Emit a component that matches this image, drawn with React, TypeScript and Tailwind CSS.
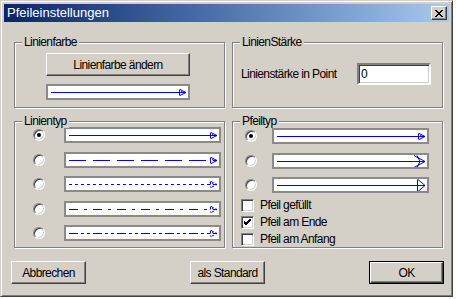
import type { ReactNode } from "react";

const BLUE = "#0000ff";

type Dash = "solid" | "long" | "dot" | "dashdot" | "dashdotdot";

const dashes: Record<Dash, string | undefined> = {
  solid: undefined,
  long: "17 7",
  dot: "3 3",
  dashdot: "9 6 3 6",
  dashdotdot: "9 3 3 3 3 3",
};

function Group({
  label,
  className,
  children,
}: {
  label: string;
  className: string;
  children?: ReactNode;
}) {
  return (
    <div
      className={`relative border border-[#808080] shadow-[inset_1px_1px_0_#fff,1px_1px_0_#fff] ${className}`}
    >
      <span className="absolute left-[7px] top-[-8px] bg-[#d4d0c8] px-[2px] leading-[14px]">
        {label}
      </span>
      {children}
    </div>
  );
}

function RaisedButton({
  children,
  className = "",
  isDefault = false,
}: {
  children: ReactNode;
  className?: string;
  isDefault?: boolean;
}) {
  const inner = (
    <div className="flex h-full w-full items-center justify-center border border-t-white border-l-white border-r-[#404040] border-b-[#404040] shadow-[inset_-1px_-1px_0_#808080]">
      {children}
    </div>
  );
  if (isDefault) {
    return (
      <button className={`border border-black bg-[#d4d0c8] p-0 ${className}`}>
        {inner}
      </button>
    );
  }
  return (
    <button className={`bg-[#d4d0c8] p-0 ${className}`}>{inner}</button>
  );
}

function Radio({ checked = false }: { checked?: boolean }) {
  return (
    <span className="flex h-[12px] w-[12px] shrink-0 items-center justify-center rounded-full border border-t-[#808080] border-l-[#808080] border-r-white border-b-white bg-white shadow-[inset_1px_1px_0_#404040,inset_-1px_-1px_0_#d4d0c8]">
      {checked && <span className="h-[4px] w-[4px] rounded-full bg-black" />}
    </span>
  );
}

function Checkbox({ checked = false }: { checked?: boolean }) {
  return (
    <span className="flex h-[13px] w-[13px] shrink-0 items-center justify-center border border-t-[#808080] border-l-[#808080] border-r-white border-b-white bg-white shadow-[inset_1px_1px_0_#404040,inset_-1px_-1px_0_#d4d0c8]">
      {checked && (
        <svg width="7" height="7" viewBox="0 0 7 7">
          <path d="M0 2 L2 4 L7 -1 M0 3 L2 5 L7 0 M0 4 L2 6 L7 1" stroke="#000" strokeWidth="1" fill="none" />
        </svg>
      )}
    </span>
  );
}

type Head = "small" | "double" | "open";

function LinePreview({
  w,
  h,
  dash = "solid",
  head = "small",
}: {
  w: number;
  h: number;
  dash?: Dash;
  head?: Head;
}) {
  const c = h / 2 + 0.5;
  const tip = w - 2;
  const da = dashes[dash];
  return (
    <div
      className="border-2 border-[#8a8a8a] bg-white"
      style={{ width: w + 4, height: h + 4 }}
    >
      <svg width={w} height={h} viewBox={`0 0 ${w} ${h}`} className="block">
        <line x1="3" y1={c} x2={tip} y2={c} stroke={BLUE} strokeWidth="1" strokeDasharray={da} />
        {head === "small" && (
          <path
            d={`M${tip - 6.5} ${c - 3} L${tip - 6.5} ${c + 3} M${tip - 6} ${c - 3} L${tip} ${c} L${tip - 6} ${c + 3} M${tip - 5} ${c - 1} L${tip - 3} ${c}`}
            stroke={BLUE}
            strokeWidth="1"
            fill="none"
            strokeDasharray={dash === "solid" || dash === "long" ? undefined : "3 2"}
          />
        )}
        {head === "double" && (
          <path
            d={`M${tip - 11} ${c - 6} L${tip} ${c} L${tip - 11} ${c + 6} M${tip - 8} ${c - 6} L${tip - 5} ${c} L${tip - 8} ${c + 6}`}
            stroke={BLUE}
            strokeWidth="1"
            fill="none"
          />
        )}
        {head === "open" && (
          <path
            d={`M${tip - 7.5} ${c - 6} L${tip - 7.5} ${c + 6} M${tip - 7} ${c - 6} L${tip} ${c} L${tip - 7} ${c + 6}`}
            stroke={BLUE}
            strokeWidth="1"
            fill="none"
          />
        )}
      </svg>
    </div>
  );
}

const lineTypes: Dash[] = ["solid", "long", "dot", "dashdot", "dashdotdot"];
const arrowTypes: Head[] = ["small", "double", "open"];

export default function App() {
  return (
    <div className="h-[299px] w-[456px] bg-white font-['Liberation_Sans',Arial,sans-serif] text-[12px] tracking-[-0.6px] text-black">
      <div className="flex h-[297px] w-[453px] flex-col border border-t-[#d4d0c8] border-l-[#d4d0c8] border-r-[#404040] border-b-[#404040] bg-[#d4d0c8] p-[3px] shadow-[inset_1px_1px_0_#fff,inset_-1px_-1px_0_#808080]">
        {/* Title bar */}
        <div className="flex h-[18px] shrink-0 items-center justify-between bg-gradient-to-r from-[#0a246a] to-[#a6caf0] pl-[3px] pr-[2px]">
          <span className="text-[13px] tracking-normal text-white">Pfeileinstellungen</span>
          <div className="flex h-[14px] w-[16px] items-center justify-center border border-t-white border-l-white border-r-[#404040] border-b-[#404040] bg-[#d4d0c8] shadow-[inset_-1px_-1px_0_#808080]">
            <svg width="8" height="7" viewBox="0 0 8 7">
              <path d="M0 0 L7 7 M1 0 L8 7 M7 0 L0 7 M8 0 L1 7" stroke="#000" strokeWidth="1" />
            </svg>
          </div>
        </div>

        {/* Row 1 */}
        <div className="ml-[10px] mt-[20px] flex gap-[7px]">
          <Group label="Linienfarbe" className="h-[66px] w-[211px] pl-[31px] pt-[10px]">
            <RaisedButton className="h-[23px] w-[144px]">Linienfarbe ändern</RaisedButton>
            <div className="mt-[8px]">
              <LinePreview w={140} h={12} />
            </div>
          </Group>
          <Group label="LinienStärke" className="flex h-[66px] w-[211px] items-start pl-[8px] pt-[20px]">
            <div className="flex h-[22px] w-full items-center">
              <span>Linienstärke in Point</span>
              <div className="ml-auto mr-[11px] flex h-[22px] w-[74px] items-center border-2 border-t-[#808080] border-l-[#808080] border-r-white border-b-white bg-white pl-[2px] shadow-[inset_1px_1px_0_#404040,inset_-1px_-1px_0_#d4d0c8]">
                0
              </div>
            </div>
          </Group>
        </div>

        {/* Row 2 */}
        <div className="ml-[10px] mt-[13px] flex gap-[7px]">
          <Group label="Linientyp" className="flex h-[127px] w-[211px] flex-col gap-[8.5px] pl-[18px] pt-[5px]">
            {lineTypes.map((d, i) => (
              <div key={d} className="flex items-center gap-[19px]">
                <Radio checked={i === 0} />
                <LinePreview w={153} h={12} dash={d} />
              </div>
            ))}
          </Group>
          <Group label="Pfeiltyp" className="flex h-[127px] w-[211px] flex-col pt-[6px]">
            <div className="flex flex-col gap-[8.5px] pl-[12px]">
              {arrowTypes.map((h, i) => (
                <div key={h} className="flex items-center gap-[15px]">
                  <Radio checked={i === 0} />
                  <LinePreview w={153} h={12} head={h} />
                </div>
              ))}
            </div>
            <div className="mt-[6px] flex flex-col gap-[4px] pl-[8px]">
              {[
                ["Pfeil gefüllt", false],
                ["Pfeil am Ende", true],
                ["Pfeil am Anfang", false],
              ].map(([label, checked]) => (
                <div key={label as string} className="flex h-[13px] items-center gap-[6px]">
                  <Checkbox checked={checked as boolean} />
                  <span className="leading-[13px]">{label as string}</span>
                </div>
              ))}
            </div>
          </Group>
        </div>

        {/* Buttons */}
        <div className="ml-[7px] mr-[5px] mt-[13px] flex justify-between">
          <RaisedButton className="h-[23px] w-[75px]">Abbrechen</RaisedButton>
          <RaisedButton className="h-[23px] w-[75px]">als Standard</RaisedButton>
          <RaisedButton isDefault className="h-[23px] w-[75px]">OK</RaisedButton>
        </div>
      </div>
    </div>
  );
}
